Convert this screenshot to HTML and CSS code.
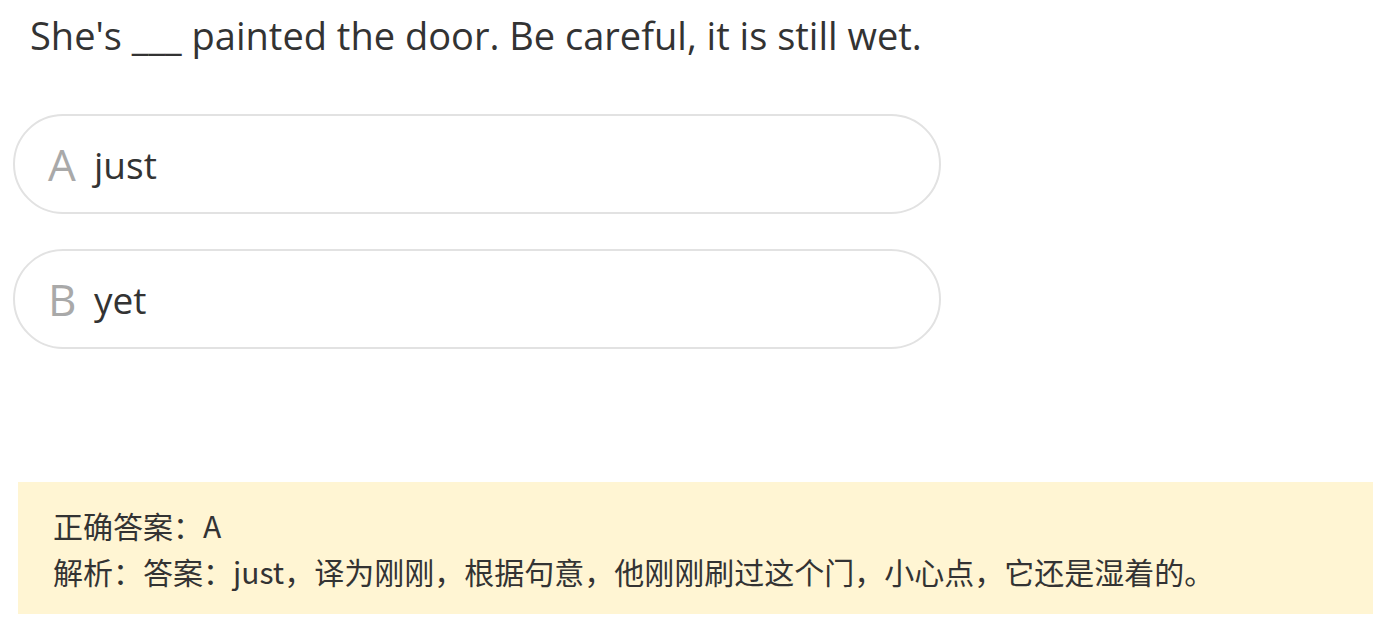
FILE: index.html
```html
<!DOCTYPE html>
<html lang="zh">
<head>
<meta charset="utf-8">
<link rel="stylesheet" href="styles.css">
</head>
<body>
<div class="page">
  <div class="question">She's ___ painted the door. Be careful, it is still wet.</div>
  <div class="options">
    <div class="option"><span class="label">A</span><span class="text">just</span></div>
    <div class="option"><span class="label">B</span><span class="text">yet</span></div>
  </div>
  <div class="analysis">
    <div class="line">正确答案：A</div>
    <div class="line">解析：答案：just，译为刚刚，根据句意，他刚刚刷过这个门，小心点，它还是湿着的。</div>
  </div>
</div>
</body>
</html>
```
FILE: styles.css
```css
html, body {
  margin: 0;
  padding: 0;
  background: #fff;
}
body {
  font-family: "Open Sans", "Noto Sans CJK SC", sans-serif;
  color: #333;
}
.page {
  padding: 10px 22px 0 13px;
}
.question {
  font-size: 38px;
  line-height: 50px;
  padding-left: 17px;
}
.options {
  display: flex;
  flex-direction: column;
  gap: 35px;
  margin-top: 54px;
}
.option {
  width: 928px;
  height: 100px;
  box-sizing: border-box;
  border: 2px solid #e2e2e2;
  border-radius: 50px;
  display: flex;
  align-items: center;
  padding-left: 33px;
  font-size: 37px;
}
.label {
  color: #a9a9a9;
  font-size: 44px;
  width: 46px;
}
.analysis {
  margin: 133px 0 0 5px;
  background: #fff5d3;
  padding: 20px 35px;
  font-family: "Noto Sans CJK SC", sans-serif;
  font-size: 30px;
  line-height: 46px;
}
```
